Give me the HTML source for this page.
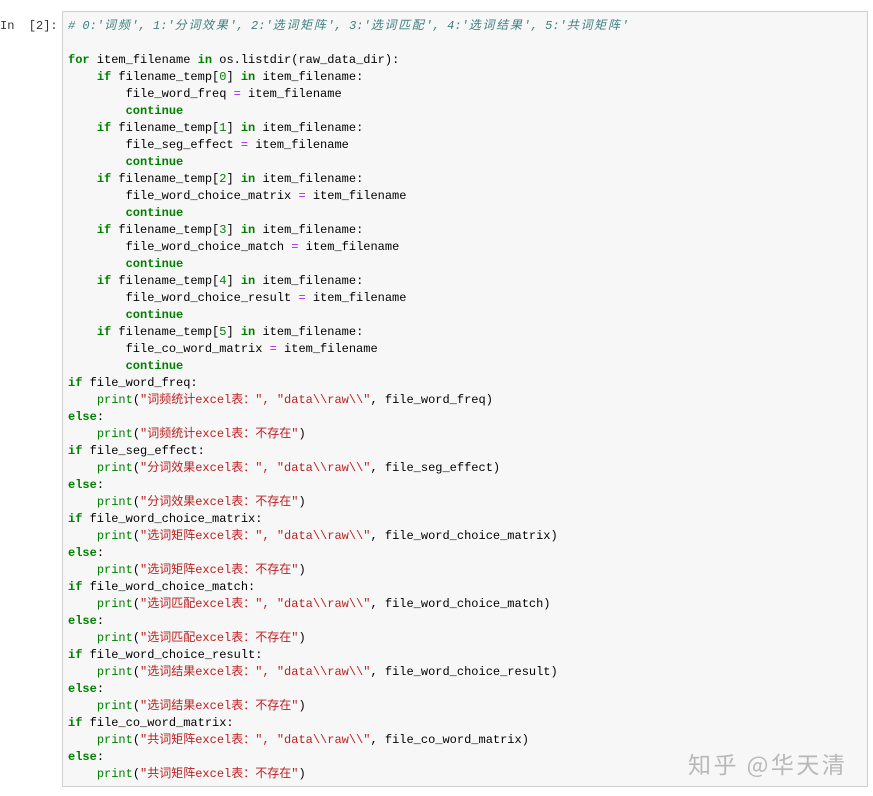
<!DOCTYPE html>
<html><head><meta charset="utf-8"><style>
html,body{margin:0;padding:0;background:#fff;width:873px;height:796px;overflow:hidden;position:relative}
.prompt{position:absolute;left:0;top:18px;font:12px "Liberation Mono","Noto Sans CJK SC",monospace;color:#333;line-height:17px;white-space:pre}
.box{position:absolute;left:62px;top:11px;width:806px;height:776px;background:#f7f7f7;border:1px solid #cfcfcf;box-sizing:border-box}
pre{margin:0;position:absolute;left:5px;top:6px;font:12px "Liberation Mono","Noto Sans CJK SC",monospace;line-height:17px;color:#000}
.k{color:#008000;font-weight:bold}
.b{color:#008000}
.s{color:#ba2121}
.c{color:#408080;font-style:italic}
.cj{letter-spacing:1.7px}
.o{color:#aa22ff}
.n{color:#008000}
.wm{position:absolute;left:688px;top:746px;font:23px "Noto Sans CJK SC",sans-serif;color:#b8b8b8;letter-spacing:2.5px;white-space:nowrap}
</style></head><body>
<div class="prompt">In  [2]:</div>
<div class="box"><pre><span class="c"># 0:'<span class="cj">词频</span>', 1:'<span class="cj">分词效果</span>', 2:'<span class="cj">选词矩阵</span>', 3:'<span class="cj">选词匹配</span>', 4:'<span class="cj">选词结果</span>', 5:'<span class="cj">共词矩阵</span>'</span>

<span class="k">for</span> item_filename <span class="k">in</span> os.listdir(raw_data_dir):
    <span class="k">if</span> filename_temp[<span class="n">0</span>] <span class="k">in</span> item_filename:
        file_word_freq <span class="o">=</span> item_filename
        <span class="k">continue</span>
    <span class="k">if</span> filename_temp[<span class="n">1</span>] <span class="k">in</span> item_filename:
        file_seg_effect <span class="o">=</span> item_filename
        <span class="k">continue</span>
    <span class="k">if</span> filename_temp[<span class="n">2</span>] <span class="k">in</span> item_filename:
        file_word_choice_matrix <span class="o">=</span> item_filename
        <span class="k">continue</span>
    <span class="k">if</span> filename_temp[<span class="n">3</span>] <span class="k">in</span> item_filename:
        file_word_choice_match <span class="o">=</span> item_filename
        <span class="k">continue</span>
    <span class="k">if</span> filename_temp[<span class="n">4</span>] <span class="k">in</span> item_filename:
        file_word_choice_result <span class="o">=</span> item_filename
        <span class="k">continue</span>
    <span class="k">if</span> filename_temp[<span class="n">5</span>] <span class="k">in</span> item_filename:
        file_co_word_matrix <span class="o">=</span> item_filename
        <span class="k">continue</span>
<span class="k">if</span> file_word_freq:
    <span class="b">print</span>(<span class="s">"词频统计excel表：", "data\\raw\\"</span>, file_word_freq)
<span class="k">else</span>:
    <span class="b">print</span>(<span class="s">"词频统计excel表：不存在"</span>)
<span class="k">if</span> file_seg_effect:
    <span class="b">print</span>(<span class="s">"分词效果excel表：", "data\\raw\\"</span>, file_seg_effect)
<span class="k">else</span>:
    <span class="b">print</span>(<span class="s">"分词效果excel表：不存在"</span>)
<span class="k">if</span> file_word_choice_matrix:
    <span class="b">print</span>(<span class="s">"选词矩阵excel表：", "data\\raw\\"</span>, file_word_choice_matrix)
<span class="k">else</span>:
    <span class="b">print</span>(<span class="s">"选词矩阵excel表：不存在"</span>)
<span class="k">if</span> file_word_choice_match:
    <span class="b">print</span>(<span class="s">"选词匹配excel表：", "data\\raw\\"</span>, file_word_choice_match)
<span class="k">else</span>:
    <span class="b">print</span>(<span class="s">"选词匹配excel表：不存在"</span>)
<span class="k">if</span> file_word_choice_result:
    <span class="b">print</span>(<span class="s">"选词结果excel表：", "data\\raw\\"</span>, file_word_choice_result)
<span class="k">else</span>:
    <span class="b">print</span>(<span class="s">"选词结果excel表：不存在"</span>)
<span class="k">if</span> file_co_word_matrix:
    <span class="b">print</span>(<span class="s">"共词矩阵excel表：", "data\\raw\\"</span>, file_co_word_matrix)
<span class="k">else</span>:
    <span class="b">print</span>(<span class="s">"共词矩阵excel表：不存在"</span>)</pre></div>
<div class="wm">知乎 @华天清</div>
</body></html>
